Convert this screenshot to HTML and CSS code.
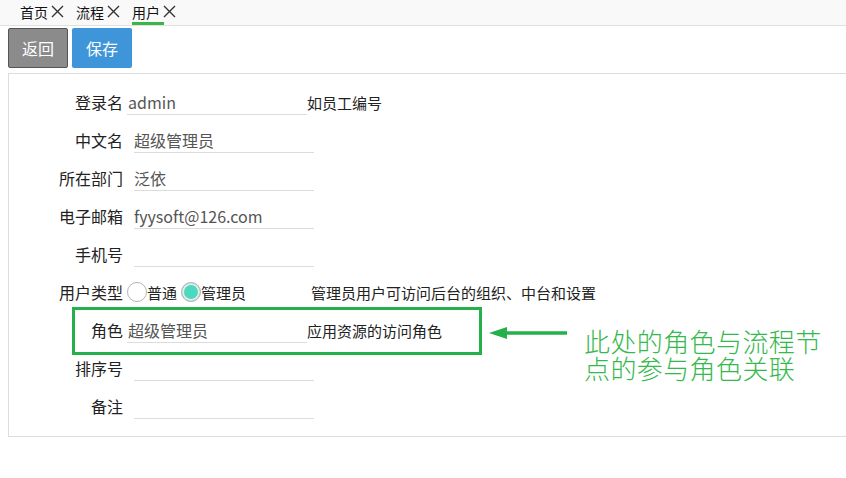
FILE: index.html
```html
<!DOCTYPE html>
<html lang="zh-CN">
<head>
<meta charset="utf-8">
<title>用户</title>
<link rel="stylesheet" href="styles.css">
</head>
<body>
<div class="tabbar">
  <div class="tab"><span>首页</span><svg class="x" viewBox="0 0 13 13"><path d="M1 1L12 12M12 1L1 12"/></svg></div>
  <div class="tab"><span>流程</span><svg class="x" viewBox="0 0 13 13"><path d="M1 1L12 12M12 1L1 12"/></svg></div>
  <div class="tab active"><span>用户</span><svg class="x" viewBox="0 0 13 13"><path d="M1 1L12 12M12 1L1 12"/></svg></div>
</div>
<div class="main">
  <div class="toolbar">
    <button class="btn btn-back">返回</button>
    <button class="btn btn-save">保存</button>
  </div>
  <div class="panel">
    <div class="row tight"><label class="lbl">登录名</label><input class="fld" value="admin"><span class="hint">如员工编号</span></div>
    <div class="row"><label class="lbl">中文名</label><input class="fld" value="超级管理员"></div>
    <div class="row"><label class="lbl">所在部门</label><input class="fld" value="泛依"></div>
    <div class="row"><label class="lbl">电子邮箱</label><input class="fld" value="fyysoft@126.com"></div>
    <div class="row"><label class="lbl">手机号</label><input class="fld" value=""></div>
    <div class="row tight"><label class="lbl">用户类型</label>
      <span class="radios">
        <span class="radio"></span><span class="rtext">普通</span>
        <span class="radio on"></span><span class="rtext">管理员</span>
      </span>
      <span class="hint hint-type">管理员用户可访问后台的组织、中台和设置</span>
    </div>
    <div class="row tight"><label class="lbl">角色</label><input class="fld" value="超级管理员"><span class="hint">应用资源的访问角色</span></div>
    <div class="row"><label class="lbl">排序号</label><input class="fld" value=""></div>
    <div class="row"><label class="lbl">备注</label><input class="fld" value=""></div>
  </div>
</div>
<div class="note-box"></div>
<svg class="note-arrow" viewBox="0 0 80 14"><path class="shaft" d="M16 7H78"/><path class="head" d="M0 7L18 1V13Z"/></svg>
<div class="note-text">此处的角色与流程节<br>点的参与角色关联</div>
</body>
</html>
```
FILE: styles.css
```css
* { box-sizing: border-box; }
html, body { margin: 0; padding: 0; background: #fff; }
body {
  width: 846px;
  height: 478px;
  overflow: hidden;
  position: relative;
  font-family: "Noto Sans CJK SC", "Noto Sans", sans-serif;
  color: #222;
}
.tabbar {
  height: 26px;
  background: #f9f9f9;
  border-bottom: 1px solid #e2e2dc;
  display: flex;
  align-items: stretch;
  padding-left: 20px;
  gap: 12px;
}
.tab {
  display: flex;
  align-items: center;
  font-size: 14px;
  line-height: 20px;
  color: #111;
  position: relative;
  padding-bottom: 2px;
}
.tab .x {
  width: 13px;
  height: 13px;
  margin-left: 3px;
  fill: none;
  stroke: #333;
  stroke-width: 1.4;
}
.tab.active::after {
  content: "";
  position: absolute;
  left: 0;
  width: 32px;
  bottom: 0;
  height: 3px;
  background: #3ab54a;
}
.main { padding: 2px 0 0 8px; }
.toolbar { display: flex; gap: 4px; height: 40px; }
.btn {
  width: 60px;
  height: 40px;
  border-radius: 2px;
  font-family: inherit;
  font-size: 16px;
  color: #fff;
  padding: 0;
}
.btn-back { background: #8b8b8b; border: 1px solid #555; }
.btn-save { background: #3e95d9; border: none; }
.panel {
  margin-top: 5px;
  width: 860px;
  border: 1px solid #ddd;
  padding: 9px 0 11px 0;
}
.row {
  height: 38px;
  display: flex;
  align-items: center;
}
.lbl {
  width: 114px;
  text-align: right;
  font-size: 16px;
  color: #222;
  flex: none;
}
.fld {
  margin-left: 11px;
  width: 180px;
  height: 26px;
  border: none;
  border-bottom: 1px solid #dcdcdc;
  outline: none;
  padding: 0;
  font-family: inherit;
  font-size: 16px;
  color: #555;
  background: transparent;
}
.tight .fld { margin-left: 4px; padding-left: 1px; }
.hint { font-size: 15px; color: #222; }
.radios {
  display: flex;
  align-items: center;
  margin-left: 4px;
  font-size: 15px;
  width: 184px;
}
.radio {
  width: 20px;
  height: 20px;
  border-radius: 50%;
  border: 1px solid #b5b5b5;
  background: #fff;
  flex: none;
}
.radio.on {
  background: #4cd9bf;
  box-shadow: inset 0 0 0 2px #eaeaea;
}
.rtext { margin-right: 4px; }
.note-box {
  position: absolute;
  left: 72px;
  top: 307px;
  width: 410px;
  height: 48px;
  border: 3px solid #24b04b;
}
.note-arrow {
  position: absolute;
  left: 489px;
  top: 326px;
  width: 80px;
  height: 14px;
}
.note-arrow .shaft { stroke: #24b04b; stroke-width: 3.5; fill: none; }
.note-arrow .head { fill: #24b04b; }
.note-text {
  position: absolute;
  left: 584px;
  top: 327px;
  font-size: 26px;
  line-height: 27px;
  letter-spacing: 0.4px;
  font-weight: 300;
  color: #35b94c;
  white-space: nowrap;
}
```
